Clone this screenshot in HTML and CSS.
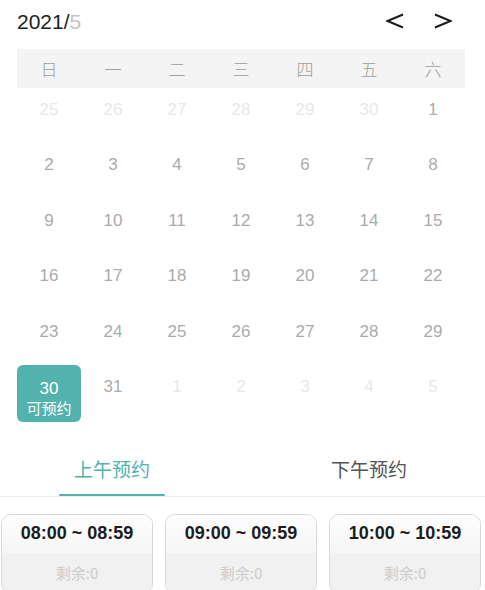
FILE: index.html
```html
<!DOCTYPE html>
<html lang="zh">
<head>
<meta charset="utf-8">
<title>预约日历</title>
<link rel="stylesheet" href="styles.css">
</head>
<body>
<div class="page">
  <header class="cal-head">
    <div class="month">2021/<span class="month-num">5</span></div>
    <div class="nav">
      <svg class="arrow" width="18" height="16" viewBox="0 0 18 16"><polyline points="17,1.5 1.5,8 17,14.5" fill="none" stroke="#1a1a1a" stroke-width="2"/></svg>
      <svg class="arrow" width="18" height="16" viewBox="0 0 18 16"><polyline points="1,1.5 16.5,8 1,14.5" fill="none" stroke="#1a1a1a" stroke-width="2"/></svg>
    </div>
  </header>

  <div class="weekdays">
    <span>日</span><span>一</span><span>二</span><span>三</span><span>四</span><span>五</span><span>六</span>
  </div>

  <div class="days">
    <div class="day other">25</div><div class="day other">26</div><div class="day other">27</div><div class="day other">28</div><div class="day other">29</div><div class="day other">30</div><div class="day">1</div>
    <div class="day">2</div><div class="day">3</div><div class="day">4</div><div class="day">5</div><div class="day">6</div><div class="day">7</div><div class="day">8</div>
    <div class="day">9</div><div class="day">10</div><div class="day">11</div><div class="day">12</div><div class="day">13</div><div class="day">14</div><div class="day">15</div>
    <div class="day">16</div><div class="day">17</div><div class="day">18</div><div class="day">19</div><div class="day">20</div><div class="day">21</div><div class="day">22</div>
    <div class="day">23</div><div class="day">24</div><div class="day">25</div><div class="day">26</div><div class="day">27</div><div class="day">28</div><div class="day">29</div>
    <div class="day selected"><span class="sel-num">30</span><span class="sel-label">可预约</span></div><div class="day">31</div><div class="day other">1</div><div class="day other">2</div><div class="day other">3</div><div class="day other">4</div><div class="day other">5</div>
  </div>

  <div class="tabs">
    <div class="tab active"><span class="tab-text">上午预约</span><span class="tab-bar"></span></div>
    <div class="tab tab-right"><span class="tab-text">下午预约</span></div>
  </div>

  <div class="slots">
    <div class="slot"><div class="slot-time">08:00 ~ 08:59</div><div class="slot-left">剩余:0</div></div>
    <div class="slot"><div class="slot-time">09:00 ~ 09:59</div><div class="slot-left">剩余:0</div></div>
    <div class="slot"><div class="slot-time">10:00 ~ 10:59</div><div class="slot-left">剩余:0</div></div>
  </div>
</div>
</body>
</html>
```

FILE: styles.css
```css
html, body {
  margin: 0;
  padding: 0;
  background: #ffffff;
}

body {
  font-family: "Liberation Sans", "Noto Sans CJK SC", sans-serif;
  color: #222;
  overflow: hidden;
}

.page {
  width: 485px;
}

.cal-head {
  height: 49px;
  box-sizing: border-box;
  padding: 0 0 7px 17px;
  display: flex;
  align-items: center;
  justify-content: space-between;
}

.month {
  font-size: 21px;
  line-height: 21px;
  color: #1e1e1e;
}

.month-num {
  color: #c4c4c4;
}

.nav {
  display: flex;
  align-items: center;
  gap: 30px;
  margin-right: 33px;
}

.arrow {
  display: block;
}

.weekdays {
  margin-left: 17px;
  width: 448px;
  height: 39px;
  background: #f4f4f4;
  display: grid;
  grid-template-columns: repeat(7, 64px);
  align-items: center;
  justify-items: center;
  font-family: "Noto Sans CJK SC", sans-serif;
  font-weight: 300;
  font-size: 17px;
  line-height: 17px;
  color: #9d9d9d;
}

.days {
  margin-left: 17px;
  width: 448px;
  display: grid;
  grid-template-columns: repeat(7, 64px);
  grid-template-rows: repeat(5, 55.4px) 57px;
}

.day {
  box-sizing: border-box;
  padding-top: 13px;
  text-align: center;
  font-size: 17px;
  line-height: 17px;
  color: #ababab;
}

.day.other {
  color: #e8e8e8;
}

.day.selected {
  background: #52b2ae;
  border-radius: 6px;
  color: #ffffff;
  padding-top: 15px;
  display: flex;
  flex-direction: column;
  align-items: center;
}

.sel-num {
  font-size: 17px;
  line-height: 17px;
}

.sel-label {
  margin-top: 3px;
  font-family: "Noto Sans CJK SC", sans-serif;
  font-size: 15px;
  line-height: 16px;
}

.tabs {
  display: grid;
  grid-template-columns: 224px 261px;
  border-bottom: 1px solid #ececec;
}

.tab {
  height: 74px;
  box-sizing: border-box;
  padding-top: 37px;
  display: flex;
  flex-direction: column;
  align-items: center;
}

.tab-right {
  padding-left: 29px;
}

.tab-text {
  font-family: "Noto Sans CJK SC", sans-serif;
  font-size: 19px;
  line-height: 19px;
  color: #555555;
}

.tab.active .tab-text {
  color: #52b2ae;
}

.tab-bar {
  margin-top: 16px;
  width: 106px;
  height: 3px;
  background: #52b2ae;
  border-radius: 1px;
}

.slots {
  margin-top: 17px;
  padding-left: 1px;
  display: flex;
  gap: 12px;
}

.slot {
  width: 152px;
  box-sizing: border-box;
  border: 1px solid #d8d8d8;
  border-radius: 10px;
  overflow: hidden;
}

.slot-time {
  height: 38px;
  display: flex;
  align-items: center;
  justify-content: center;
  background: linear-gradient(#fdfdfd, #f6f6f6);
  font-size: 18px;
  font-weight: bold;
  color: #1c1c1c;
}

.slot-left {
  height: 40px;
  display: flex;
  align-items: center;
  justify-content: center;
  background: #f1f1f1;
  font-family: "Noto Sans CJK SC", sans-serif;
  font-size: 15px;
  color: #cccccc;
}
```
